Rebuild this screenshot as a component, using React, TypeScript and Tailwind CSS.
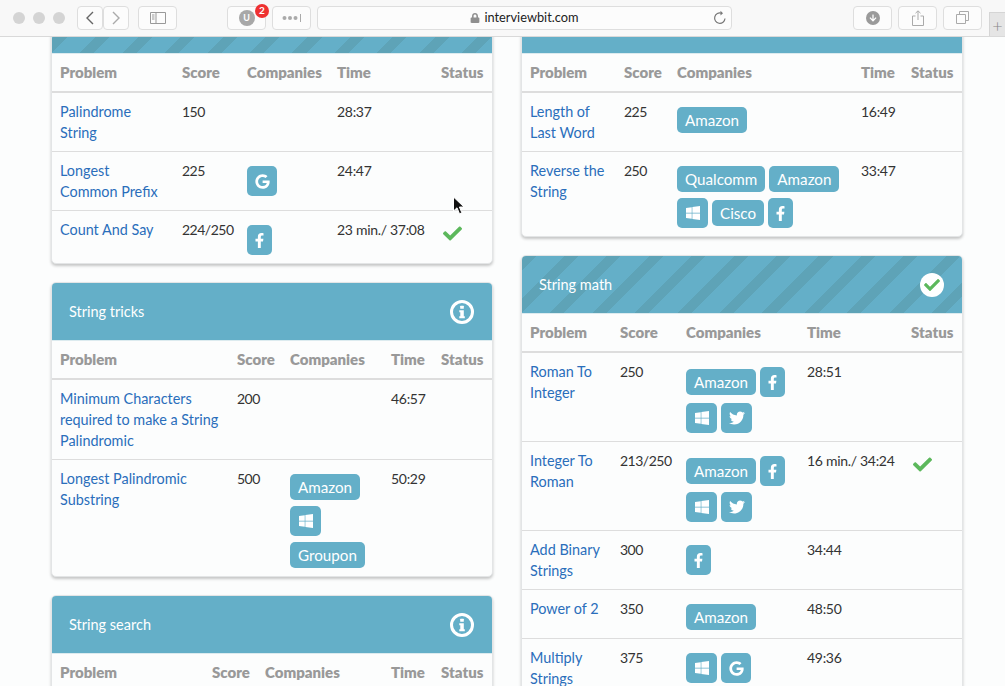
import { ReactNode } from 'react';
import { FaCheck, FaFacebookF, FaGoogle, FaLock, FaTwitter, FaWindows, FaArrowDown } from 'react-icons/fa';

type Company = 'google' | 'facebook' | 'windows' | 'twitter' | string;

interface Problem {
  name: string;
  score: string;
  companies: Company[];
  time: string;
  done?: boolean;
}

interface TopicProps {
  title: string;
  striped?: boolean;
  solved?: boolean;
  cols: string[];
  problems: Problem[];
}

const iconBadges: Record<string, { icon: ReactNode; width: string }> = {
  google: { icon: <FaGoogle size={15} />, width: 'w-[30px]' },
  facebook: { icon: <FaFacebookF size={15} />, width: 'w-[25px]' },
  windows: { icon: <FaWindows size={16} />, width: 'w-[31px]' },
  twitter: { icon: <FaTwitter size={16} />, width: 'w-[31px]' },
};

function Badge({ company }: { company: Company }) {
  const iconBadge = iconBadges[company];
  if (iconBadge) {
    return (
      <span className={`flex h-[30px] items-center justify-center rounded-[5px] bg-[#64afc8] text-white ${iconBadge.width}`}>
        {iconBadge.icon}
      </span>
    );
  }
  return (
    <span className="flex h-[26px] items-center rounded-[5px] bg-[#64afc8] px-2 text-[15.200px] text-white">{company}</span>
  );
}

function InfoIcon() {
  return (
    <svg width="24" height="24" viewBox="0 0 24 24">
      <circle cx="12" cy="12" r="10.5" fill="none" stroke="#fff" strokeWidth="3" />
      <rect x="10.2" y="5.8" width="3.6" height="3" rx="0.5" fill="#fff" />
      <path d="M9.3 10.2h4.5v6h1v2H9.3v-2h1v-4h-1z" fill="#fff" />
    </svg>
  );
}

function TopicCard({ title, striped, solved, cols, problems }: TopicProps) {
  return (
    <div className="mb-[18px] overflow-hidden rounded-[5px] border border-[#e3e5e6] bg-[#fcfdfd] shadow-[0_2px_3px_rgba(0,0,0,0.22)]">
      <div
        className={`flex h-[58px] items-center justify-between border-b border-[#dcebef] pl-[17px] pr-[18px] text-[14.500px] text-white ${
          striped
            ? 'bg-[repeating-linear-gradient(135deg,#5ea3b7_0px,#5ea3b7_10px,#64afc8_10px,#64afc8_30px)]'
            : 'bg-[#64afc8]'
        }`}
      >
        <span>{title}</span>
        {solved ? (
          <span className="flex h-6 w-6 items-center justify-center rounded-full bg-white text-[#5cb85c]">
            <FaCheck size={16} />
          </span>
        ) : (
          <InfoIcon />
        )}
      </div>
      <table className="w-full table-fixed border-collapse text-[14.400px] leading-[21px] text-[#333]">
        <thead>
          <tr className="border-b-2 border-[#ddd] text-left text-[15px] text-[#999]">
            {['Problem', 'Score', 'Companies', 'Time', 'Status'].map((label, i) => (
              <th key={label} className={`whitespace-nowrap p-2 font-extrabold ${cols[i]}`}>
                {label}
              </th>
            ))}
          </tr>
        </thead>
        <tbody>
          {problems.map((problem) => (
            <tr key={problem.name} className="border-b border-[#ddd] align-top last:border-b-0">
              <td className="p-2 text-[#2a6ebb]">{problem.name}</td>
              <td className="p-2 text-[14px] tracking-[-0.5px]">{problem.score}</td>
              <td className="px-2 pb-2 pt-[14px]">
                <div className="flex flex-wrap items-center gap-x-1 gap-y-[6px]">
                  {problem.companies.map((company, i) => (
                    <Badge key={i} company={company} />
                  ))}
                </div>
              </td>
              <td className="whitespace-nowrap p-2 text-[14px] tracking-[-0.3px]">{problem.time}</td>
              <td className="px-[10px] pb-2 pt-[13px] text-[#5cb85c]">{problem.done && <FaCheck size={19} />}</td>
            </tr>
          ))}
        </tbody>
      </table>
    </div>
  );
}

function ToolButton({ className, children }: { className: string; children?: ReactNode }) {
  return (
    <div className={`relative flex h-[24px] items-center justify-center rounded-[4px] border border-[#dedede] bg-[#fcfcfc] ${className}`}>
      {children}
    </div>
  );
}

function Toolbar() {
  return (
    <div className="relative z-10 flex h-[37px] shrink-0 items-center border-b border-[#d9d9d9] bg-[#f8f8f8] pb-[1px] pl-[13px]">
      <div className="flex gap-2">
        <span className="h-3 w-3 rounded-full bg-[#d4d4d4]" />
        <span className="h-3 w-3 rounded-full bg-[#d4d4d4]" />
        <span className="h-3 w-3 rounded-full bg-[#d4d4d4]" />
      </div>
      <ToolButton className="ml-3 w-[26px]">
        <svg width="10" height="14" viewBox="0 0 10 14" fill="none" stroke="#666" strokeWidth="1.4">
          <path d="M8 1 2 7l6 6" />
        </svg>
      </ToolButton>
      <ToolButton className="w-[26px]">
        <svg width="10" height="14" viewBox="0 0 10 14" fill="none" stroke="#aaa" strokeWidth="1.4">
          <path d="m2 1 6 6-6 6" />
        </svg>
      </ToolButton>
      <ToolButton className="ml-[9px] w-[39px]">
        <svg width="16" height="12" viewBox="0 0 16 12" fill="none" stroke="#999">
          <path d="M.5.5h15v11H.5zM6 .5v11M2 3h2.500M2 5h2.500M2 7h2.500" />
        </svg>
      </ToolButton>
      <ToolButton className="ml-[50px] w-[39px]">
        <span className="flex h-4 w-4 items-center justify-center rounded-full bg-[#a8a8a8] text-[9px] font-bold text-white">U</span>
        <span className="absolute left-[27px] top-[-3px] flex h-[14px] w-[14px] items-center justify-center rounded-full bg-[#ee3131] text-[10px] font-bold text-white">
          2
        </span>
      </ToolButton>
      <ToolButton className="ml-[6px] w-[39px]">
        <svg width="20" height="8" viewBox="0 0 20 8" fill="#aaa">
          <circle cx="2.5" cy="4" r="2" />
          <circle cx="8" cy="4" r="2" />
          <circle cx="13.5" cy="4" r="2" />
          <rect x="18" y="0" width="1" height="8" />
        </svg>
      </ToolButton>
      <ToolButton className="ml-[6px] w-[415px]">
        <FaLock size={10} className="mr-1 text-[#8f8f8f]" />
        <span className="text-[12.800px] text-[#222]">interviewbit.com</span>
        <svg className="absolute right-[3px] top-[3px]" width="16" height="16" viewBox="0 0 16 16" fill="none" stroke="#777" strokeWidth="1.2">
          <path d="M13 8.500A5.200 5.200 0 1 1 9.500 3.200" />
          <path d="M8.500 .8 11 3.200 8.500 5.600" fill="#777" stroke="none" />
        </svg>
      </ToolButton>
      <ToolButton className="ml-[121px] w-[39px]">
        <span className="flex h-[14px] w-[14px] items-center justify-center rounded-full bg-[#9a9a9a] text-white">
          <FaArrowDown size={8} />
        </span>
      </ToolButton>
      <ToolButton className="ml-[6px] w-[39px]">
        <svg width="12" height="16" viewBox="0 0 12 16" fill="none" stroke="#aaa">
          <path d="M3.500 6H.5v9.500h11V6h-3M6 10V1M3.500 3.200 6 .8l2.500 2.400" />
        </svg>
      </ToolButton>
      <ToolButton className="ml-[6px] w-[39px]">
        <svg width="13" height="13" viewBox="0 0 13 13" fill="none" stroke="#aaa">
          <path d="M.5 3.500h9v9h-9zM3.500 3.500v-3h9v9h-3" />
        </svg>
      </ToolButton>
      <div className="absolute bottom-0 right-0 flex h-[24px] w-[16px] items-center justify-center border-l border-t border-[#d5d5d5] bg-[#e5e5e5] text-[18px] font-light leading-none text-[#888]">
        +
      </div>
    </div>
  );
}

export default function App() {
  return (
    <div className="relative flex h-[686px] w-[1005px] flex-col overflow-hidden bg-[#fcfdfd] font-['Lato','Liberation_Sans',sans-serif]">
      <Toolbar />
      <div className="flex gap-[28px] pl-[51px]">
        <div className="-mt-[42px] w-[442px]">
          <TopicCard
            title="String basics"
            striped
            cols={['w-[122px]', 'w-[65px]', 'w-[90px]', 'w-[104px]', 'w-[59px]']}
            problems={[
              { name: 'Palindrome String', score: '150', companies: [], time: '28:37' },
              { name: 'Longest Common Prefix', score: '225', companies: ['google'], time: '24:47' },
              { name: 'Count And Say', score: '224/250', companies: ['facebook'], time: '23 min./ 37:08', done: true },
            ]}
          />
          <TopicCard
            title="String tricks"
            cols={['w-[177px]', 'w-[53px]', 'w-[101px]', 'w-[50px]', 'w-[59px]']}
            problems={[
              { name: 'Minimum Characters required to make a String Palindromic', score: '200', companies: [], time: '46:57' },
              { name: 'Longest Palindromic Substring', score: '500', companies: ['Amazon', 'windows', 'Groupon'], time: '50:29' },
            ]}
          />
          <TopicCard
            title="String search"
            cols={['w-[152px]', 'w-[53px]', 'w-[126px]', 'w-[50px]', 'w-[59px]']}
            problems={[]}
          />
        </div>
        <div className="-mt-[42px] w-[442px]">
          <TopicCard
            title="String parsing"
            cols={['w-[94px]', 'w-[53px]', 'w-[184px]', 'w-[50px]', 'w-[59px]']}
            problems={[
              { name: 'Length of Last Word', score: '225', companies: ['Amazon'], time: '16:49' },
              { name: 'Reverse the String', score: '250', companies: ['Qualcomm', 'Amazon', 'windows', 'Cisco', 'facebook'], time: '33:47' },
            ]}
          />
          <TopicCard
            title="String math"
            striped
            solved
            cols={['w-[90px]', 'w-[66px]', 'w-[121px]', 'w-[104px]', 'w-[59px]']}
            problems={[
              { name: 'Roman To Integer', score: '250', companies: ['Amazon', 'facebook', 'windows', 'twitter'], time: '28:51' },
              { name: 'Integer To Roman', score: '213/250', companies: ['Amazon', 'facebook', 'windows', 'twitter'], time: '16 min./ 34:24', done: true },
              { name: 'Add Binary Strings', score: '300', companies: ['facebook'], time: '34:44' },
              { name: 'Power of 2', score: '350', companies: ['Amazon'], time: '48:50' },
              { name: 'Multiply Strings', score: '375', companies: ['windows', 'google'], time: '49:36' },
            ]}
          />
        </div>
      </div>
      {/* mouse pointer */}
      <svg className="absolute left-[452px] top-[196px]" width="13" height="20" viewBox="0 0 13 20">
        <path d="M1.500 1v14l3.500-3.200 2.500 6 2.400-1-2.500-5.800h4.600z" fill="#111" stroke="#fff" strokeWidth="1" />
      </svg>
    </div>
  );
}
